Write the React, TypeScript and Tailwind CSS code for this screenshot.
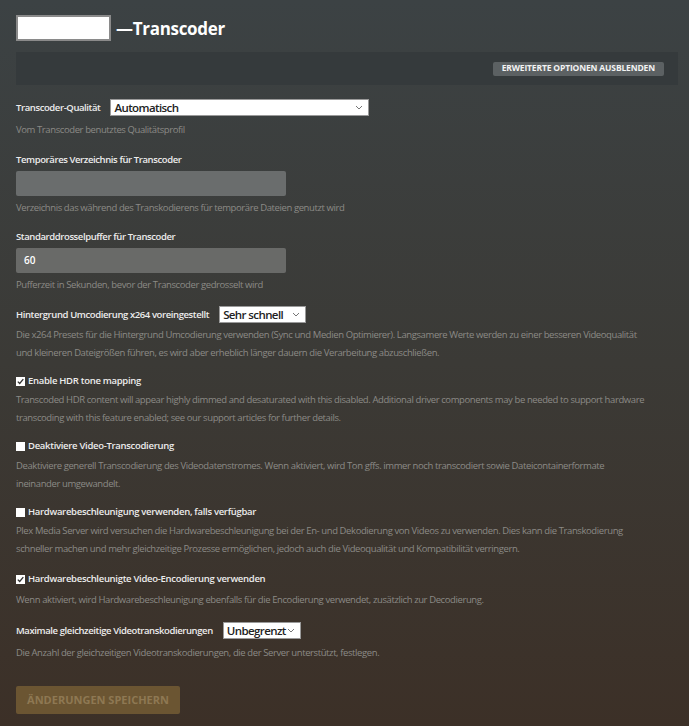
import React from "react";

const Chevron = () => (
  <svg width="8" height="5" viewBox="0 0 8 5" className="shrink-0">
    <path d="M1 1l3 3 3-3" fill="none" stroke="#777" strokeWidth="1" />
  </svg>
);

const Select = ({ value, className }: { value: string; className: string }) => (
  <div
    className={`flex items-center justify-between whitespace-nowrap bg-white border border-[#9a9a9a] pl-[3px] pr-[5px] text-[11.5px] font-semibold text-[#222] leading-none tracking-[-0.6px] ${className}`}
  >
    <span>{value}</span>
    <Chevron />
  </div>
);

const Check = ({ checked }: { checked: boolean }) => (
  <span className="inline-flex h-[9px] w-[9px] items-center justify-center bg-white mr-[3px] shrink-0">
    {checked && (
      <svg width="9" height="9" viewBox="0 0 9 9">
        <path d="M1.8 4.6l1.9 1.9 3.6-4.3" fill="none" stroke="#333" strokeWidth="1.3" />
      </svg>
    )}
  </span>
);

const Help = ({ children, className = "" }: { children: React.ReactNode; className?: string }) => (
  <p className={`text-[9.5px] leading-[18px] tracking-[-0.4px] text-[#8b8a86] ${className}`}>{children}</p>
);

const Label = ({ children, className = "" }: { children: React.ReactNode; className?: string }) => (
  <div className={`text-[9.5px] font-semibold text-[#ececec] leading-[14px] tracking-[-0.4px] whitespace-nowrap ${className}`}>
    {children}
  </div>
);

const CheckRow = ({ checked, label, className = "" }: { checked: boolean; label: string; className?: string }) => (
  <div className={`flex items-center text-[9.5px] font-semibold text-[#ececec] leading-[14px] tracking-[-0.3px] ${className}`}>
    <Check checked={checked} />
    {label}
  </div>
);

export default function App() {
  return (
    <div
      className="min-h-screen w-full bg-gradient-to-b from-[#3c4244] via-[#3b3a36] to-[#3c3027] pl-4 pr-[11px] pt-[15px] pb-3"
      style={{ fontFamily: '"Open Sans", sans-serif' }}
    >
      <div className="flex items-center h-[26px]">
        <div className="h-[26px] w-[95px] bg-white border-2 border-[#8a8a8a]" />
        <h1 className="ml-[5px] text-[17px] font-bold text-white leading-none tracking-[-0.3px]">—Transcoder</h1>
      </div>

      <div className="mt-[11px] h-[33px] bg-[#353a3c] flex items-center justify-end pr-[14px]">
        <button className="h-[14px] px-[9px] bg-[#5c6163] rounded-[2px] text-[8.5px] font-bold text-[#f2f2f2] leading-none tracking-[-0.15px]">
          ERWEITERTE OPTIONEN AUSBLENDEN
        </button>
      </div>

      <div className="mt-[14px] flex items-center">
        <Label className="mr-[10px]">Transcoder-Qualität</Label>
        <Select value="Automatisch" className="w-[259px] h-[17px]" />
      </div>
      <Help className="mt-[5px]">Vom Transcoder benutztes Qualitätsprofil</Help>

      <Label className="mt-[14px]">Temporäres Verzeichnis für Transcoder</Label>
      <div className="mt-[4px] h-[25px] w-[270px] rounded-[2px] bg-[#6a6d6d]" />
      <Help className="mt-[3px]">Verzeichnis das während des Transkodierens für temporäre Dateien genutzt wird</Help>

      <Label className="mt-[13px]">Standarddrosselpuffer für Transcoder</Label>
      <div className="mt-[4px] h-[25px] w-[270px] rounded-[2px] bg-[#696a68] flex items-center pl-[8px] text-[10px] font-semibold text-white">
        60
      </div>
      <Help className="mt-[3px]">Pufferzeit in Sekunden, bevor der Transcoder gedrosselt wird</Help>

      <div className="mt-[12px] flex items-center">
        <Label className="mr-[10px]">Hintergrund Umcodierung x264 voreingestellt</Label>
        <Select value="Sehr schnell" className="w-[87px] h-[17px]" />
      </div>
      <Help className="mt-[3px]">
        Die x264 Presets für die Hintergrund Umcodierung verwenden (Sync und Medien Optimierer). Langsamere Werte werden zu einer besseren Videoqualität
        <br />
        und kleineren Dateigrößen führen, es wird aber erheblich länger dauern die Verarbeitung abzuschließen.
      </Help>

      <CheckRow checked label="Enable HDR tone mapping" className="mt-[12px]" />
      <Help className="mt-[3px]">
        Transcoded HDR content will appear highly dimmed and desaturated with this disabled. Additional driver components may be needed to support hardware
        <br />
        transcoding with this feature enabled; see our support articles for further details.
      </Help>

      <CheckRow checked={false} label="Deaktiviere Video-Transcodierung" className="mt-[12px]" />
      <Help className="mt-[4px]">
        Deaktiviere generell Transcodierung des Videodatenstromes. Wenn aktiviert, wird Ton gffs. immer noch transcodiert sowie Dateicontainerformate
        <br />
        ineinander umgewandelt.
      </Help>

      <CheckRow checked={false} label="Hardwarebeschleunigung verwenden, falls verfügbar" className="mt-[12px]" />
      <Help className="mt-[3px]">
        Plex Media Server wird versuchen die Hardwarebeschleunigung bei der En- und Dekodierung von Videos zu verwenden. Dies kann die Transkodierung
        <br />
        schneller machen und mehr gleichzeitige Prozesse ermöglichen, jedoch auch die Videoqualität und Kompatibilität verringern.
      </Help>

      <CheckRow checked label="Hardwarebeschleunigte Video-Encodierung verwenden" className="mt-[14px]" />
      <Help className="mt-[5px]">
        Wenn aktiviert, wird Hardwarebeschleunigung ebenfalls für die Encodierung verwendet, zusätzlich zur Decodierung.
      </Help>

      <div className="mt-[13px] flex items-center">
        <Label className="mr-[10px]">Maximale gleichzeitige Videotranskodierungen</Label>
        <Select value="Unbegrenzt" className="w-[78px] h-[17px]" />
      </div>
      <Help className="mt-[5px]">Die Anzahl der gleichzeitigen Videotranskodierungen, die der Server unterstützt, festlegen.</Help>

      <button className="mt-[24px] h-[28px] w-[164px] rounded-[2px] bg-[#6b5532] text-[11px] font-bold text-[#8e7853]">
        ÄNDERUNGEN SPEICHERN
      </button>
    </div>
  );
}
